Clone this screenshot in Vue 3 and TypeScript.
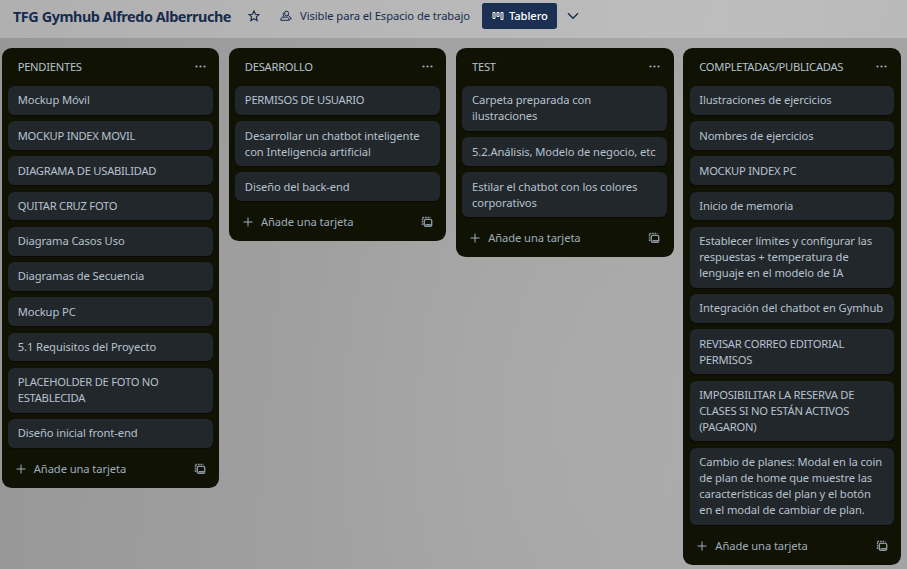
<script setup lang="ts">
interface Card { lines: string[] }
interface List { title: string; cards: Card[] }

const c = (...lines: string[]): Card => ({ lines })
const isCaps = (text: string): boolean => text === text.toUpperCase()

const lists: List[] = [
  {
    title: 'PENDIENTES',
    cards: [
      c('Mockup Móvil'), c('MOCKUP INDEX MOVIL'), c('DIAGRAMA DE USABILIDAD'), c('QUITAR CRUZ FOTO'),
      c('Diagrama Casos Uso'), c('Diagramas de Secuencia'), c('Mockup PC'), c('5.1 Requisitos del Proyecto'),
      c('PLACEHOLDER DE FOTO NO', 'ESTABLECIDA'), c('Diseño inicial front-end'),
    ],
  },
  {
    title: 'DESARROLLO',
    cards: [
      c('PERMISOS DE USUARIO'),
      c('Desarrollar un chatbot inteligente', 'con Inteligencia artificial'),
      c('Diseño del back-end'),
    ],
  },
  {
    title: 'TEST',
    cards: [
      c('Carpeta preparada con', 'ilustraciones'),
      c('5.2.Análisis, Modelo de negocio, etc'),
      c('Estilar el chatbot con los colores', 'corporativos'),
    ],
  },
  {
    title: 'COMPLETADAS/PUBLICADAS',
    cards: [
      c('Ilustraciones de ejercicios'), c('Nombres de ejercicios'), c('MOCKUP INDEX PC'), c('Inicio de memoria'),
      c('Establecer límites y configurar las', 'respuestas + temperatura de', 'lenguaje en el modelo de IA'),
      c('Integración del chatbot en Gymhub'),
      c('REVISAR CORREO EDITORIAL', 'PERMISOS'),
      c('IMPOSIBILITAR LA RESERVA DE', 'CLASES SI NO ESTÁN ACTIVOS', '(PAGARON)'),
      c('Cambio de planes: Modal en la coin', 'de plan de home que muestre las', 'características del plan y el botón', 'en el modal de cambiar de plan.'),
    ],
  },
]
</script>

<template>
  <div class="board">
    <header class="bar">
      <h1 class="title">TFG Gymhub Alfredo Alberruche</h1>
      <svg class="star" viewBox="0 0 12 12"><path d="M6 .9 7.500 4.200 11 4.500 8.400 6.900 9.200 10.600 6 8.700 2.800 10.600 3.600 6.900 1 4.500 4.500 4.200Z" /></svg>
      <div class="visibility">
        <svg class="people" viewBox="0 0 12 12">
          <ellipse cx="6.600" cy="3.500" rx="2" ry="2.400" />
          <path d="M4.600 2.600Q2.900 2.600 3.100 4.600 3.300 6 4.400 6.100M8.200 5.200 9 6.200Q11 6.900 11.200 9H9.600M3.700 6.200 1.500 7.600Q.7 8.400.8 10.300H9.200Q9.300 7.700 7.200 7.100 4.500 6.700 3 8" />
        </svg>
        <span>Visible para el Espacio de trabajo</span>
      </div>
      <button class="view">
        <svg class="columns" viewBox="0 0 12 10"><path d="M1 1.500H3V7.500H1ZM5 1.500H7V5.500H5ZM9 1.500H11V8.500H9Z" /></svg>
        <span>Tablero</span>
      </button>
      <svg class="chevron" viewBox="0 0 12 8"><path d="M1 1.200 6 6.300 11 1.200" /></svg>
    </header>
    <main class="lists">
      <section v-for="list in lists" :key="list.title" class="list">
        <div class="list-head">
          <h2>{{ list.title }}</h2>
          <svg class="dots" viewBox="0 0 11 3"><circle cx="1.500" cy="1.500" r="1.100" /><circle cx="5.500" cy="1.500" r="1.100" /><circle cx="9.500" cy="1.500" r="1.100" /></svg>
        </div>
        <div class="cards">
          <article v-for="card in list.cards" :key="card.lines[0]" class="card">
            <div v-for="line in card.lines" :key="line" :class="{ caps: isCaps(line) }">{{ line }}</div>
          </article>
        </div>
        <div class="list-foot">
          <svg class="plus" viewBox="0 0 10 10"><path d="M5 .5V9.500M.5 5H9.500" /></svg>
          <span>Añade una tarjeta</span>
          <svg class="template" viewBox="0 0 12 12">
            <path class="dash" d="M1.500 9V1.500H9.500" />
            <rect x="3.300" y="3.400" width="7.400" height="6.900" rx="1.300" />
            <path d="M4.500 8.700H10.500" />
          </svg>
        </div>
      </section>
    </main>
  </div>
</template>

<style>
body { margin: 0; overflow: hidden; }
</style>

<style scoped>
.board {
  width: 907px;
  height: 569px;
  overflow: hidden;
  font-family: "Noto Sans", sans-serif;
  font-size: 11.2px;
  line-height: 16px;
  letter-spacing: -.09px;
  background:
    radial-gradient(ellipse 300px 360px at 590px 400px, rgba(176, 176, 176, .4), transparent),
    linear-gradient(95deg, #979797, #a2a2a2 45%, #a9a9a9 75%, #a3a3a3);
}
.bar {
  display: flex;
  align-items: center;
  box-sizing: border-box;
  height: 38px;
  padding: 0 0 6px 13px;
  color: #172b4d;
  background: rgba(255, 255, 255, .24);
}
svg { fill: none; stroke: currentColor; flex: none; }
.title { margin: 2px 0 0; width: 218px; font-size: 14.4px; font-weight: 700; white-space: nowrap; letter-spacing: -.43px; }
.star { width: 12px; height: 12px; margin: 0 0 1px 17px; stroke-width: 1.100; }
.visibility { display: flex; align-items: center; width: 190px; margin-left: 20px; white-space: nowrap; letter-spacing: -.06px; }
.people { width: 12px; height: 12px; margin-right: 8px; }
.view {
  display: flex;
  align-items: center;
  height: 26px;
  width: 75px;
  margin-left: 12px;
  padding: 0 0 1px 10px;
  gap: 5px;
  color: #fff;
  background: #1c3054;
  border: 0;
  border-radius: 2.400px;
  font: 500 11.200px "Noto Sans", sans-serif;
  letter-spacing: -.1px;
}
.columns { width: 12px; height: 10px; }
.chevron { width: 12px; height: 8px; margin-left: 10px; stroke-width: 1.400; }
.lists { display: flex; align-items: flex-start; gap: 9.600px; padding: 10px 0 0 1.600px; }
.list { box-sizing: border-box; flex: none; width: 217.600px; padding: 0 6.400px; border-radius: 9.600px; background: #101204; color: #b6c2cf; }
.list-head { display: flex; align-items: center; justify-content: space-between; height: 38px; padding: 0 7px 0 9.700px; }
h2 { margin: 0; font-size: 11.200px; font-weight: 400; letter-spacing: -.27px; }
.dots { width: 11px; height: 3px; margin-bottom: 1px; fill: #9fadbc; stroke: none; }
.cards { display: flex; flex-direction: column; gap: 6.450px; }
.card { padding: 6.400px 9.700px; border-radius: 6.400px; background: #22272b; box-shadow: 0 1px 1px rgba(3, 4, 4, .5); white-space: nowrap; }
.caps { letter-spacing: -.25px; }
.list-foot { display: flex; align-items: center; height: 40px; padding: 2px 6.800px 0 7.800px; color: #9fadbc; box-sizing: border-box; }
.plus { width: 10px; height: 10px; margin-right: 8px; }
.template { width: 12px; height: 12px; margin-left: auto; stroke-width: 1.400; opacity: .85; }
.dash { stroke-dasharray: 1.700 .8; }
</style>
